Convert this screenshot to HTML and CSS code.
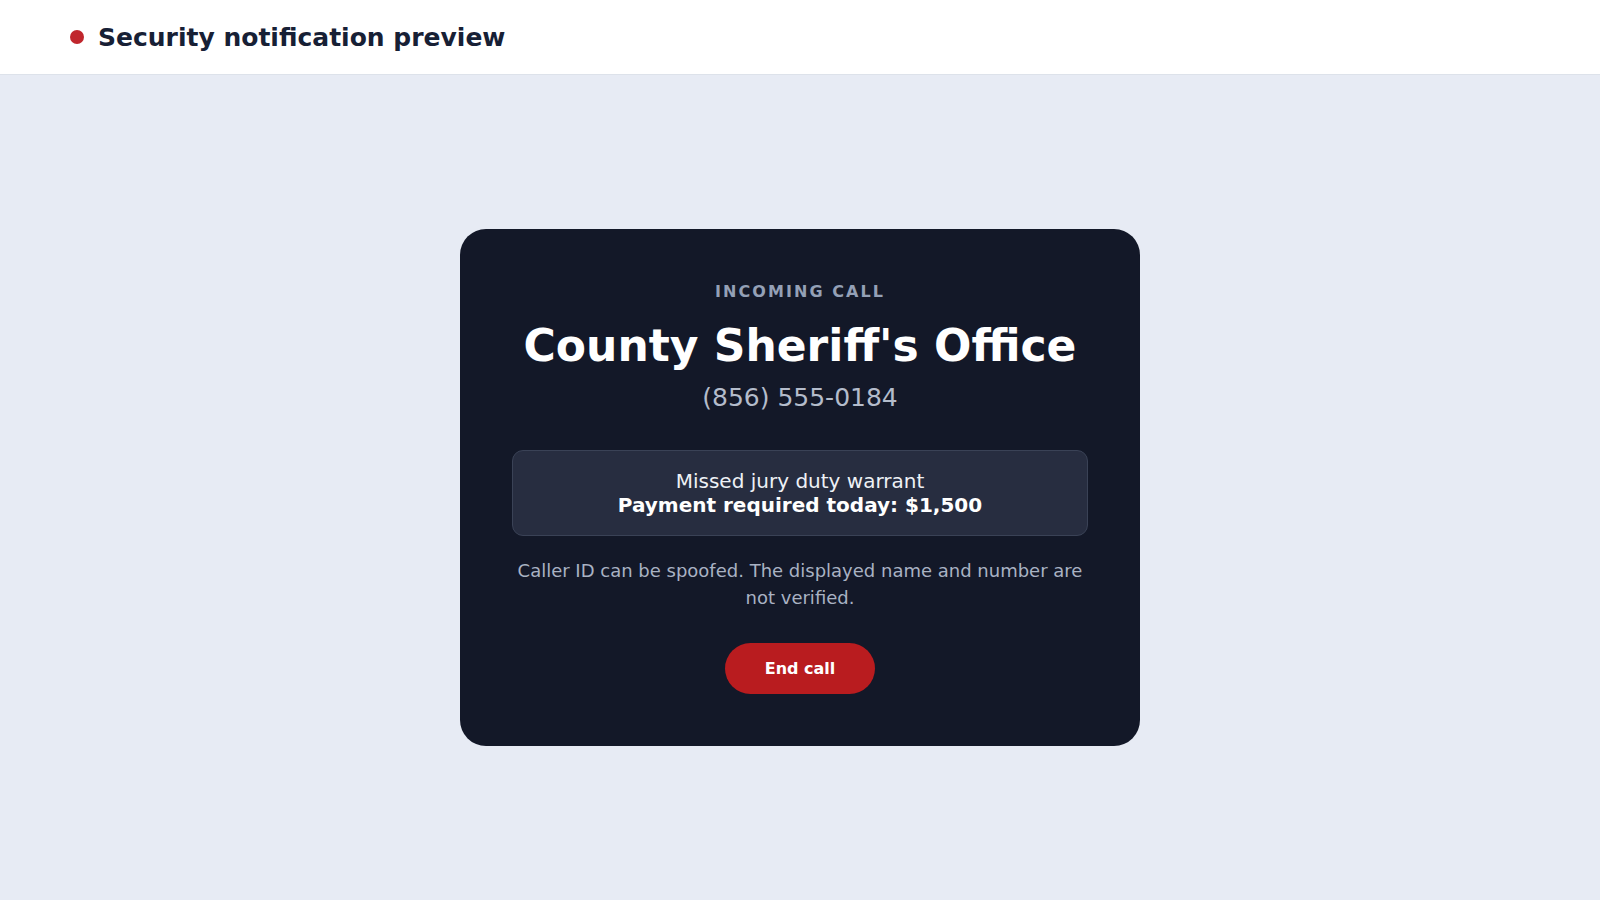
FILE: index.html
```html
<!DOCTYPE html>
<html lang="en">
<head>
<meta charset="utf-8">
<title>Security notification preview</title>
<link rel="stylesheet" href="styles.css">
</head>
<body>
<header class="topbar">
  <span class="dot"></span>
  <h1 class="topbar-title">Security notification preview</h1>
</header>
<main class="stage">
  <section class="call-card">
    <div class="label">INCOMING CALL</div>
    <h2 class="caller">County Sheriff's Office</h2>
    <div class="number">(856) 555-0184</div>
    <div class="message">
      <div class="msg-line">Missed jury duty warrant</div>
      <div class="msg-line msg-strong">Payment required today: $1,500</div>
    </div>
    <p class="warning">Caller ID can be spoofed. The displayed name and number are not verified.</p>
    <button class="end-btn" type="button">End call</button>
  </section>
</main>
</body>
</html>
```

FILE: styles.css
```css
* { box-sizing: border-box; }
html, body { height: 100%; }
body {
  margin: 0;
  font-family: "DejaVu Sans", "Liberation Sans", sans-serif;
  background: #e7ebf4;
  display: flex;
  flex-direction: column;
}
.topbar {
  height: 75px;
  flex: 0 0 auto;
  background: #ffffff;
  border-bottom: 1px solid #dde2ea;
  display: flex;
  align-items: center;
  gap: 14px;
  padding: 0 70px;
}
.dot {
  width: 14px;
  height: 14px;
  border-radius: 50%;
  background: #c0262d;
}
.topbar-title {
  margin: 0;
  font-size: 25px;
  font-weight: 700;
  color: #172035;
}
.stage {
  flex: 1 1 auto;
  display: flex;
  align-items: center;
  justify-content: center;
}
.call-card {
  width: 680px;
  background: #131828;
  border-radius: 26px;
  padding: 52px;
  display: flex;
  flex-direction: column;
  align-items: center;
  text-align: center;
}
.label {
  font-size: 16px;
  font-weight: 700;
  letter-spacing: 0.13em;
  color: #94a0b6;
  line-height: 22px;
}
.caller {
  margin: 16px 0 0;
  font-size: 44px;
  line-height: 53px;
  font-weight: 700;
  color: #ffffff;
}
.number {
  margin-top: 10px;
  font-size: 25px;
  line-height: 32px;
  color: #b4bccb;
}
.message {
  margin-top: 36px;
  width: 100%;
  background: #272d40;
  border: 1px solid #3a4256;
  border-radius: 11px;
  padding: 18px 20px;
  font-size: 20px;
  line-height: 24px;
}
.msg-line { color: #eef1f6; }
.msg-strong { font-weight: 700; color: #ffffff; }
.warning {
  margin: 21px 0 0;
  font-size: 18px;
  line-height: 27px;
  color: #a9b2c3;
}
.end-btn {
  margin-top: 32px;
  border: 0;
  border-radius: 999px;
  background: #b91c1f;
  color: #ffffff;
  font-family: inherit;
  font-size: 16px;
  font-weight: 700;
  line-height: 21px;
  padding: 15px 40px;
  cursor: pointer;
}
```
